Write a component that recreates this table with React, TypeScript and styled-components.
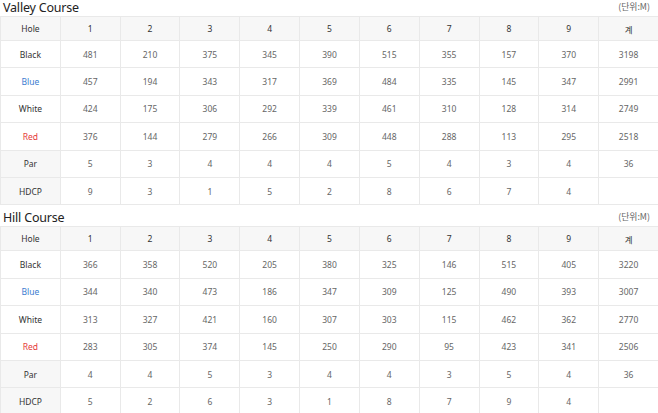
import styled, { createGlobalStyle } from 'styled-components';

const GlobalStyle = createGlobalStyle`
  html, body {
    margin: 0;
    padding: 0;
    background: #fff;
  }
  body {
    font-family: "Noto Sans", "Noto Sans CJK KR", sans-serif;
    color: #333;
  }
`;

const Page = styled.div`
  width: 658px;
  display: flex;
  flex-direction: column;
  gap: 5px;
`;

const Section = styled.section`
  display: flex;
  flex-direction: column;
`;

const TitleRow = styled.div`
  height: 16px;
  display: flex;
  align-items: flex-end;
  justify-content: space-between;
  padding: 0 8px 0 3px;
`;

const Title = styled.h2`
  margin: 0;
  font-size: 12.5px;
  font-weight: 400;
  line-height: 16px;
  color: #222;
  letter-spacing: -0.2px;
`;

const Unit = styled.span`
  font-family: "Noto Sans CJK KR", sans-serif;
  font-size: 8.8px;
  line-height: 16px;
  color: #666;
  margin-bottom: 1px;
`;

const Table = styled.table`
  width: 659px;
  table-layout: fixed;
  border-collapse: collapse;
  font-size: 8.5px;
`;

const HeadRow = styled.tr`
  height: 24px;
  background: #f7f7f7;
`;

const Row = styled.tr`
  height: 27.4px;
`;

const Cell = styled.td<{ $label?: boolean; $shade?: boolean; $tone?: 'blue' | 'red' }>`
  border: 1px solid #e9e9e9;
  text-align: center;
  vertical-align: middle;
  padding: 0;
  color: ${(p) =>
    p.$tone === 'blue' ? '#3b7ccf' : p.$tone === 'red' ? '#e53a3a' : p.$label ? '#333' : '#666'};
  background: ${(p) => (p.$shade ? '#f7f7f7' : 'transparent')};
`;

const HeadCell = styled.th`
  border: 1px solid #e9e9e9;
  font-weight: 400;
  color: #333;
  padding: 0;
  text-align: center;
`;

type CourseRow = { label: string; tone?: 'blue' | 'red'; shade?: boolean; values: (number | '')[] };

const holes = ['1', '2', '3', '4', '5', '6', '7', '8', '9', '계'];

const valley: CourseRow[] = [
  { label: 'Black', values: [481, 210, 375, 345, 390, 515, 355, 157, 370, 3198] },
  { label: 'Blue', tone: 'blue', values: [457, 194, 343, 317, 369, 484, 335, 145, 347, 2991] },
  { label: 'White', values: [424, 175, 306, 292, 339, 461, 310, 128, 314, 2749] },
  { label: 'Red', tone: 'red', values: [376, 144, 279, 266, 309, 448, 288, 113, 295, 2518] },
  { label: 'Par', shade: true, values: [5, 3, 4, 4, 4, 5, 4, 3, 4, 36] },
  { label: 'HDCP', shade: true, values: [9, 3, 1, 5, 2, 8, 6, 7, 4, ''] },
];

const hill: CourseRow[] = [
  { label: 'Black', values: [366, 358, 520, 205, 380, 325, 146, 515, 405, 3220] },
  { label: 'Blue', tone: 'blue', values: [344, 340, 473, 186, 347, 309, 125, 490, 393, 3007] },
  { label: 'White', values: [313, 327, 421, 160, 307, 303, 115, 462, 362, 2770] },
  { label: 'Red', tone: 'red', values: [283, 305, 374, 145, 250, 290, 95, 423, 341, 2506] },
  { label: 'Par', shade: true, values: [4, 4, 5, 3, 4, 4, 3, 5, 4, 36] },
  { label: 'HDCP', shade: true, values: [5, 2, 6, 3, 1, 8, 7, 9, 4, ''] },
];

function Course({ name, rows }: { name: string; rows: CourseRow[] }) {
  return (
    <Section>
      <TitleRow>
        <Title>{name}</Title>
        <Unit>(단위:M)</Unit>
      </TitleRow>
      <Table>
        <thead>
          <HeadRow>
            <HeadCell>Hole</HeadCell>
            {holes.map((h) => (
              <HeadCell key={h}>{h}</HeadCell>
            ))}
          </HeadRow>
        </thead>
        <tbody>
          {rows.map((r) => (
            <Row key={r.label}>
              <Cell $label $shade={r.shade} $tone={r.tone}>
                {r.label}
              </Cell>
              {r.values.map((v, i) => (
                <Cell key={i}>{v}</Cell>
              ))}
            </Row>
          ))}
        </tbody>
      </Table>
    </Section>
  );
}

export default function App() {
  return (
    <Page>
      <GlobalStyle />
      <Course name="Valley Course" rows={valley} />
      <Course name="Hill Course" rows={hill} />
    </Page>
  );
}
